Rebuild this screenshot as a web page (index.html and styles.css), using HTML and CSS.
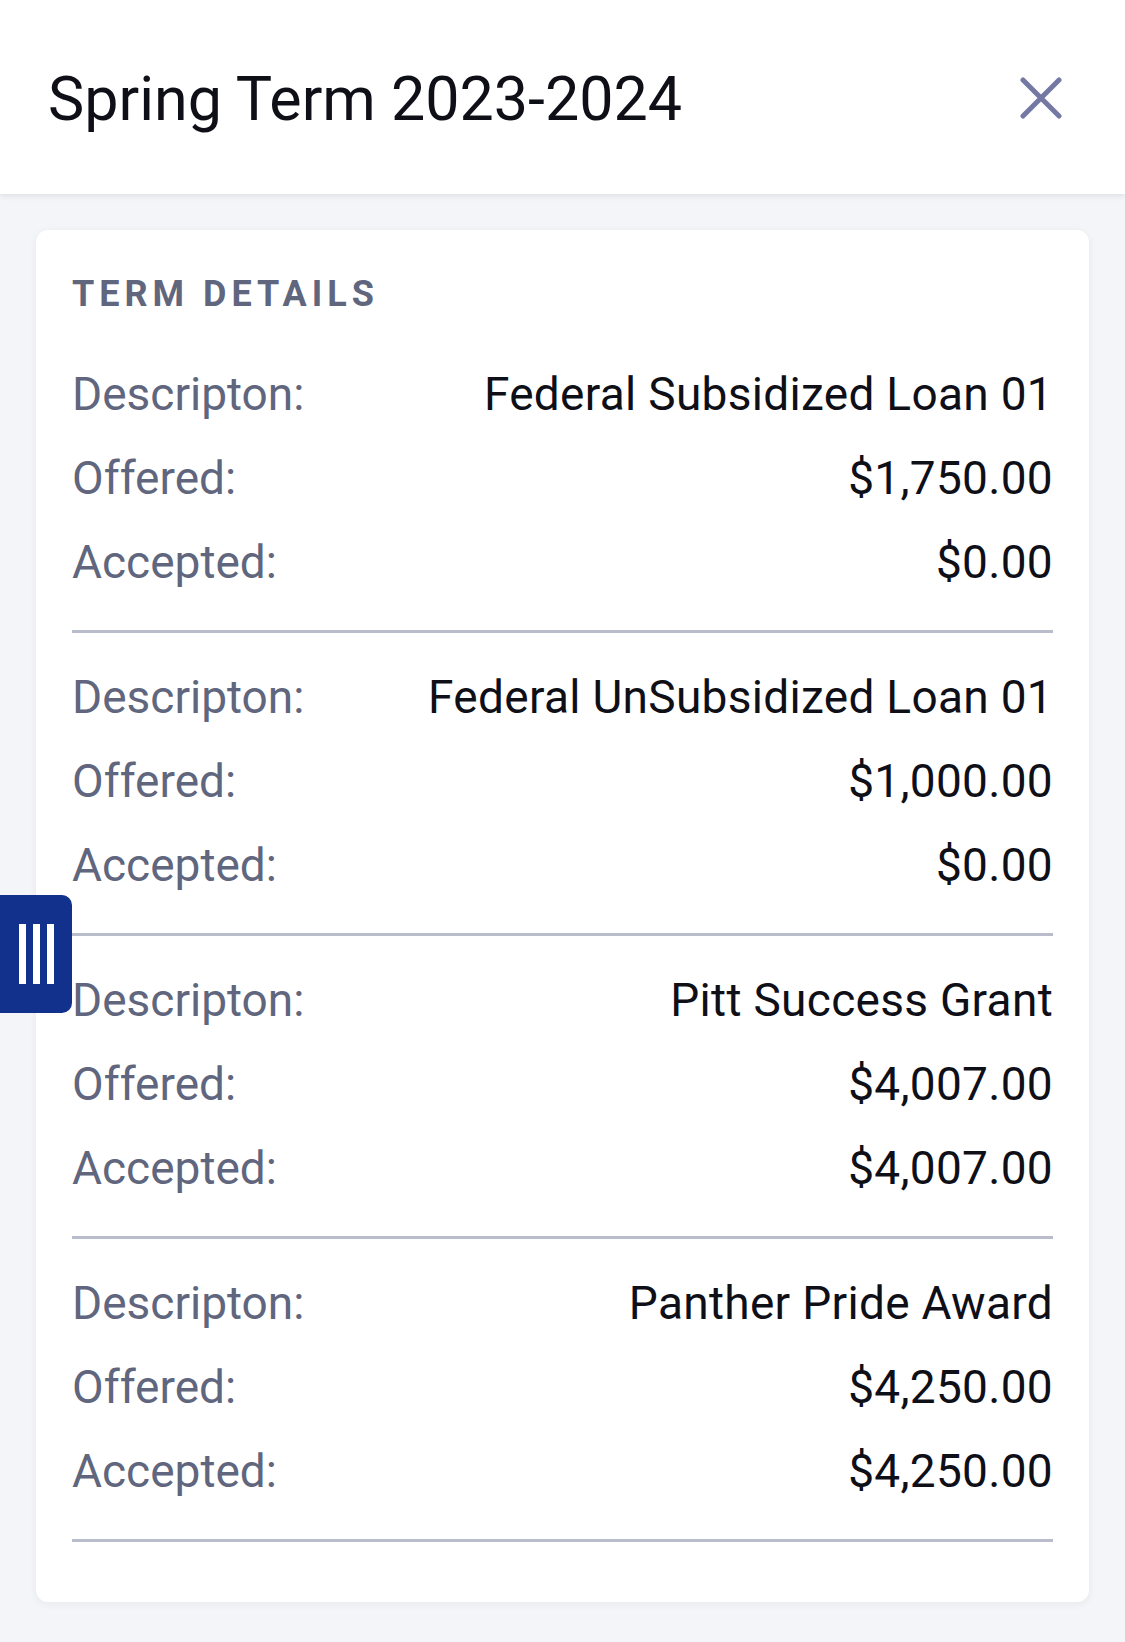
FILE: index.html
```html
<!DOCTYPE html>
<html lang="en">
<head>
<meta charset="utf-8">
<title>Spring Term 2023-2024</title>
<link rel="stylesheet" href="styles.css">
</head>
<body>
<header class="top-bar">
  <h1 class="title">Spring Term 2023-2024</h1>
  <button class="close-btn" aria-label="Close">
    <svg viewBox="0 0 42 42" width="42" height="42"><path d="M3 3 L39 39 M39 3 L3 39" stroke="#7479a4" stroke-width="5" stroke-linecap="round" fill="none"/></svg>
  </button>
</header>
<main class="content">
  <section class="card">
    <h2 class="section-label">TERM DETAILS</h2>
    <div class="award">
      <div class="row"><span class="key">Descripton:</span><span class="val">Federal Subsidized Loan 01</span></div>
      <div class="row"><span class="key">Offered:</span><span class="val">$1,750.00</span></div>
      <div class="row"><span class="key">Accepted:</span><span class="val">$0.00</span></div>
    </div>
    <div class="award">
      <div class="row"><span class="key">Descripton:</span><span class="val">Federal UnSubsidized Loan 01</span></div>
      <div class="row"><span class="key">Offered:</span><span class="val">$1,000.00</span></div>
      <div class="row"><span class="key">Accepted:</span><span class="val">$0.00</span></div>
    </div>
    <div class="award">
      <div class="row"><span class="key">Descripton:</span><span class="val">Pitt Success Grant</span></div>
      <div class="row"><span class="key">Offered:</span><span class="val">$4,007.00</span></div>
      <div class="row"><span class="key">Accepted:</span><span class="val">$4,007.00</span></div>
    </div>
    <div class="award">
      <div class="row"><span class="key">Descripton:</span><span class="val">Panther Pride Award</span></div>
      <div class="row"><span class="key">Offered:</span><span class="val">$4,250.00</span></div>
      <div class="row"><span class="key">Accepted:</span><span class="val">$4,250.00</span></div>
    </div>
  </section>
</main>
<div class="side-tab" aria-hidden="true">
  <span class="bar"></span><span class="bar"></span><span class="bar"></span>
</div>
</body>
</html>
```
FILE: styles.css
```css
* { box-sizing: border-box; }
html, body {
  margin: 0;
  padding: 0;
}
body {
  background: #f4f5f8;
  font-family: Roboto, "Liberation Sans", sans-serif;
  width: 1125px;
  min-height: 1642px;
  position: relative;
}
.top-bar {
  height: 194px;
  background: #ffffff;
  display: flex;
  align-items: center;
  justify-content: space-between;
  padding: 0 63px 0 48px;
  box-shadow: 0 2px 6px rgba(30, 40, 70, 0.10);
  position: relative;
  z-index: 1;
}
.title {
  margin: 0;
  font-size: 61px;
  font-weight: 400;
  color: #0f0f17;
  line-height: 1;
  padding-top: 4px;
}
.close-btn {
  border: 0;
  background: none;
  padding: 0;
  width: 42px;
  height: 42px;
  display: flex;
  margin-top: 2px;
}
.content {
  padding: 36px 36px 41px;
}
.card {
  background: #ffffff;
  border-radius: 12px;
  box-shadow: 0 2px 8px rgba(30, 40, 70, 0.06);
  padding: 42px 36px 38px;
}
.section-label {
  margin: 0 0 36px;
  font-size: 36px;
  font-weight: 700;
  letter-spacing: 5px;
  color: #5f667d;
  line-height: 44px;
}
.award {
  border-bottom: 3px solid #b9bdcb;
  padding-bottom: 26px;
  margin-bottom: 22px;
}
.row {
  display: flex;
  justify-content: space-between;
  align-items: center;
  height: 84px;
  font-size: 46px;
}
.key {
  color: #5f667d;
}
.val {
  color: #0f0f17;
  letter-spacing: 0.3px;
}
.side-tab {
  position: absolute;
  left: 0;
  top: 895px;
  width: 72px;
  height: 118px;
  background: #12318d;
  border-radius: 0 10px 10px 0;
  display: flex;
  justify-content: center;
  align-items: center;
  gap: 7px;
  z-index: 2;
}
.bar {
  width: 7px;
  height: 60px;
  background: #ffffff;
}
```
